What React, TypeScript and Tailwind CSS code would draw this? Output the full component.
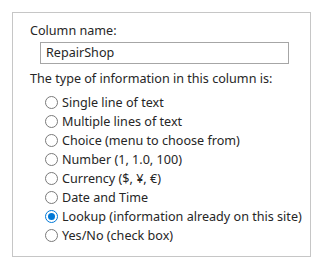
import React from "react";

const options = [
  "Single line of text",
  "Multiple lines of text",
  "Choice (menu to choose from)",
  "Number (1, 1.0, 100)",
  "Currency ($, ¥, €)",
  "Date and Time",
  "Lookup (information already on this site)",
  "Yes/No (check box)",
];

const Radio = ({ checked }: { checked: boolean }) =>
  checked ? (
    <span className="flex h-[13px] w-[13px] shrink-0 items-center justify-center rounded-full border border-[#0078d7] bg-white">
      <span className="h-[7px] w-[7px] rounded-full bg-[#0078d7]" />
    </span>
  ) : (
    <span className="h-[13px] w-[13px] shrink-0 rounded-full border border-[#7a7a7a] bg-white" />
  );

const App = () => {
  return (
    <div
      className="h-[270px] w-[323px] bg-white pl-[12px] pt-[12px] text-[12.6px] text-[#262626]"
      style={{ fontFamily: '"Noto Sans", "Open Sans", sans-serif' }}
    >
      <div className="h-[245px] w-[299px] border border-[#c6c6c6] pl-[17px] pt-[9px]">
        <div className="leading-[18px]">Column name:</div>
        <div className="ml-[10px] mt-[2px] flex h-[22px] w-[249px] items-center border border-[#a6a6a6] px-[5px] leading-[18px]">
          RepairShop
        </div>
        <div className="mt-[6px] leading-[18px]">The type of information in this column is:</div>
        <div className="ml-[15px] mt-[5px] flex flex-col">
          {options.map((o, i) => (
            <label key={o} className="flex h-[19px] items-center gap-[4px] leading-[18px]">
              <Radio checked={i === 6} />
              <span>{o}</span>
            </label>
          ))}
        </div>
      </div>
    </div>
  );
};

export default App;
